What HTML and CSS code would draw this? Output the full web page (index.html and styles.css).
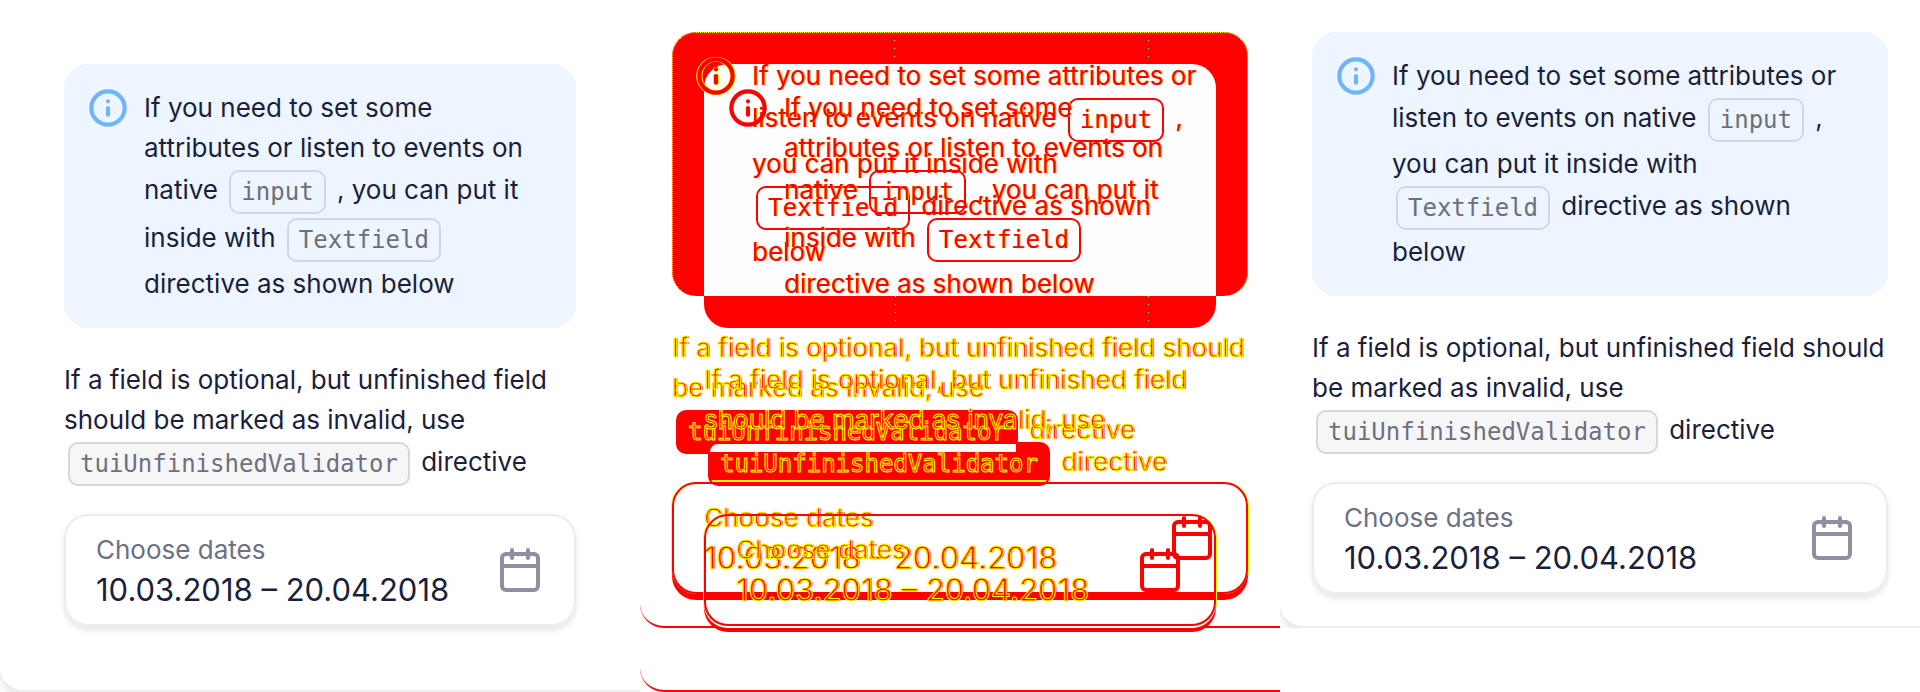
FILE: index.html
```html
<!DOCTYPE html>
<html lang="en">
<head>
<meta charset="utf-8">
<title>Input date range: visual diff</title>
<link rel="stylesheet" href="styles.css">
</head>
<body>
<svg class="sprite" aria-hidden="true">
  <symbol id="info" viewBox="0 0 24 24"><circle cx="12" cy="12" r="10"/><path d="M12 16v-4M12 8h.01"/></symbol>
  <symbol id="calendar" viewBox="0 0 24 24"><path d="M8 2v4M16 2v4M3 10h18"/><rect x="3" y="4" width="18" height="18" rx="2"/></symbol>
</svg>
<main class="compare">
  <section class="frame">
    <div class="panel panel-wide">
      <div class="alert"><svg class="icon-info"><use href="#info"/></svg>
        <p class="text">If you need to set some attributes or listen to events on native <code class="code">input</code> , you can put it inside with <code class="code">Textfield</code> directive as shown below</p></div>
      <p class="text note">If a field is optional, but unfinished field should be marked as invalid, use <code class="code code-filled">tuiUnfinishedValidator</code> directive</p>
      <div class="field">
        <div class="field-body"><label class="label" for="dates-1">Choose dates</label><input class="dates" id="dates-1" type="text" value="10.03.2018 – 20.04.2018"></div>
        <button class="pick" type="button" aria-label="Open calendar"><svg class="icon-calendar"><use href="#calendar"/></svg></button>
      </div>
    </div>
  </section>

  <section class="frame diff">
    <div class="panel layer layer-narrow">
      <div class="alert"><svg class="icon-info"><use href="#info"/></svg>
        <p class="text">If you need to set some attributes or listen to events on native <code class="code">input</code> , you can put it inside with <code class="code">Textfield</code> directive as shown below</p></div>
      <p class="text note">If a field is optional, but unfinished field should be marked as invalid, use <code class="code code-filled">tuiUnfinishedValidator</code> directive</p>
      <div class="field">
        <div class="field-body"><label class="label" for="dates-2">Choose dates</label><input class="dates" id="dates-2" type="text" value="10.03.2018 – 20.04.2018"></div>
        <button class="pick" type="button" aria-label="Open calendar"><svg class="icon-calendar"><use href="#calendar"/></svg></button>
      </div>
    </div>
    <div class="panel panel-wide layer layer-wide">
      <div class="alert"><svg class="icon-info"><use href="#info"/></svg>
        <p class="text">If you need to set some attributes or listen to events on native <code class="code">input</code> , you can put it inside with <code class="code">Textfield</code> directive as shown below</p></div>
      <p class="text note">If a field is optional, but unfinished field should be marked as invalid, use <code class="code code-filled">tuiUnfinishedValidator</code> directive</p>
      <div class="field">
        <div class="field-body"><label class="label" for="dates-3">Choose dates</label><input class="dates" id="dates-3" type="text" value="10.03.2018 – 20.04.2018"></div>
        <button class="pick" type="button" aria-label="Open calendar"><svg class="icon-calendar"><use href="#calendar"/></svg></button>
      </div>
    </div>
  </section>

  <section class="frame">
    <div class="panel">
      <div class="alert"><svg class="icon-info"><use href="#info"/></svg>
        <p class="text">If you need to set some attributes or listen to events on native <code class="code">input</code> , you can put it inside with <code class="code">Textfield</code> directive as shown below</p></div>
      <p class="text note">If a field is optional, but unfinished field should be marked as invalid, use <code class="code code-filled">tuiUnfinishedValidator</code> directive</p>
      <div class="field">
        <div class="field-body"><label class="label" for="dates-4">Choose dates</label><input class="dates" id="dates-4" type="text" value="10.03.2018 – 20.04.2018"></div>
        <button class="pick" type="button" aria-label="Open calendar"><svg class="icon-calendar"><use href="#calendar"/></svg></button>
      </div>
    </div>
  </section>
</main>
</body>
</html>
```

FILE: styles.css
```css
* { box-sizing: border-box; }
body { margin: 0; background: #fff; color: #1b1f3b; font-family: Inter, sans-serif; font-size: 26px; line-height: 40px; }
.sprite { display: none; }
.compare { display: grid; grid-template-columns: repeat(3, 1fr); align-items: start; }
.frame { overflow: hidden; min-width: 0; }
.panel { padding: 32px; border-bottom: 2px solid #ededed; border-bottom-left-radius: 24px; box-shadow: 0 4px 8px rgba(0, 0, 0, .12); }
.panel-wide { padding: 64px; }
.alert { display: flex; gap: 16px; padding: 24px; border-radius: 24px; background: #edf5ff; }
.text { margin: 0; }
.note { margin-top: 32px; }
.code { display: inline-block; vertical-align: middle; margin: 2px 4px; padding: 0 10px; border: 2px solid #d1d8e2; border-radius: 10px; color: #6c7078; font: 24px/40px "DejaVu Sans Mono", monospace; }
.code-filled { border-color: #d7d7d7; background: #f6f6f6; color: #6e6f80; }
.icon-info { flex: none; width: 40px; height: 40px; overflow: visible; fill: none; stroke: #70b6f6; stroke-width: 2.5; stroke-linecap: round; stroke-linejoin: round; }
.icon-calendar { display: block; width: 48px; height: 48px; fill: none; stroke: #8d90a0; stroke-width: 2; stroke-linecap: round; stroke-linejoin: round; }
.field { display: flex; align-items: center; justify-content: space-between; margin-top: 26px; padding: 14px 30px; border: 2px solid #ededed; border-radius: 24px; box-shadow: 0 4px 6px rgba(0, 0, 0, .1); }
.field-body { display: flex; flex: 1; flex-direction: column; min-width: 0; }
.label { color: #6e6f80; line-height: 40px; }
.dates { width: 100%; height: 40px; padding: 0; border: 0; outline: 0; background: none; color: inherit; font: 400 31px/40px Inter, sans-serif; }
.pick { flex: none; padding: 0; border: 0; background: none; }

/* Difference view: both states stacked in one grid cell */
.diff { display: grid; align-items: start; }
.layer { grid-area: 1 / 1; color: #f00; border-color: #f00; box-shadow: none; }
.layer .alert {
  position: relative;
  background:
    linear-gradient(#ff0 1px, transparent 1px) 222px 0 / 1px 8px repeat-y,
    linear-gradient(#ff0 1px, transparent 1px) 476px 0 / 1px 8px repeat-y,
    #f00;
}
.layer-wide .alert { background-position: 191px 0, 444px 0, 0 0; }
/* Area covered by both alerts is unchanged */
.layer-wide .alert::before { content: ""; position: absolute; z-index: 1; inset: 0 0 32px; border-radius: 24px 24px 0 0; background: #fdfdfd; }
.layer-narrow .alert::after { content: ""; position: absolute; inset: 0; border: 1px dotted #ff0; border-bottom: 0; border-radius: 24px; }
.layer .text, .layer .icon-info { position: relative; z-index: 2; }
.layer .alert .text { -webkit-text-stroke: 0; text-shadow: 1px 0 0 #ffb000; }
.layer .code { border-color: #f00; color: #f00; }
.layer .icon-info, .layer .icon-calendar { stroke: #f00; }
.layer-narrow .icon-info { filter: drop-shadow(1px 0 0 #ff0) drop-shadow(-1px 0 0 #ff0); }
.layer .note, .layer .label, .layer .dates { color: #f00; -webkit-text-stroke: 1px #ff0; text-shadow: 1px 0 0 #f00; }
.layer .code-filled { background: #f00; }
.layer-wide .code-filled {
  background:
    linear-gradient(#ff0, #ff0) 0 36px / 100% 2px no-repeat,
    linear-gradient(#fff, #fff) 0 0 / calc(100% - 32px) 8px no-repeat,
    #f00;
}
.layer .field { border-color: #f00; }
.layer-narrow .field { box-shadow: 0 6px 0 #f00, 1px 0 0 #ff0, -1px 0 0 #ff0; }
.layer-wide .field { box-shadow: 0 2px 0 #fff, 0 6px 0 #f00, 1px 0 0 #ff0, -1px 0 0 #ff0; }
```
